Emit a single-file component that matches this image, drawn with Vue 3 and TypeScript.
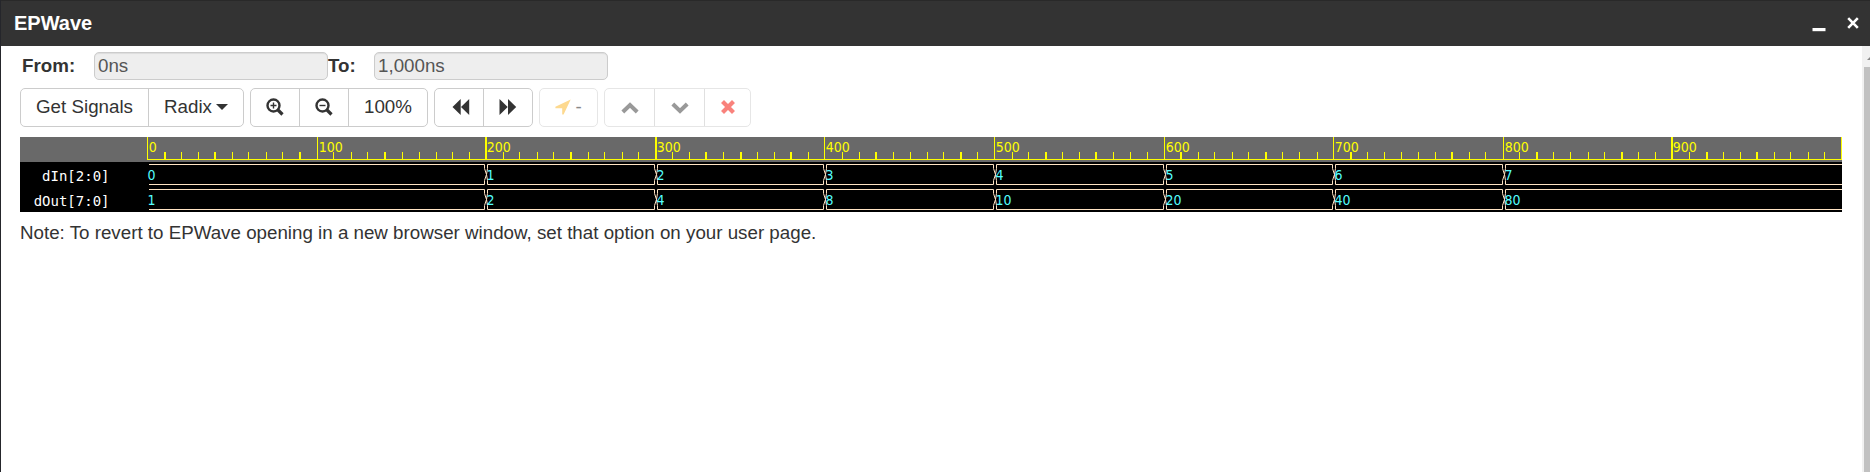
<script setup lang="ts">
interface Signal {
  name: string
  values: string[]
}

const signals: Signal[] = [
  { name: 'dIn[2:0]', values: ['0', '1', '2', '3', '4', '5', '6', '7'] },
  { name: 'dOut[7:0]', values: ['1', '2', '4', '8', '10', '20', '40', '80'] },
]

/* Tick columns, snapped to whole pixels; every tenth one is a major tick. */
const tickX: number[] = [
  127, 144, 161, 178, 194, 212, 228, 246, 262, 279,
  297, 313, 331, 347, 364, 382, 399, 416, 432, 449,
  465, 483, 499, 517, 533, 550, 568, 584, 602, 618,
  635, 652, 669, 685, 703, 720, 737, 754, 770, 788,
  804, 822, 839, 855, 873, 890, 907, 923, 940, 957,
  974, 992, 1008, 1025, 1042, 1059, 1075, 1093, 1110, 1127,
  1144, 1160, 1178, 1194, 1212, 1228, 1245, 1262, 1279, 1297,
  1313, 1330, 1347, 1364, 1381, 1398, 1415, 1431, 1449, 1465,
  1483, 1499, 1516, 1533, 1550, 1568, 1584, 1601, 1618, 1635,
  1651, 1669, 1686, 1703, 1720, 1736, 1754, 1770, 1788, 1804,
  1821,
]
const wide = new Set<number>([
  144, 194, 279, 364, 465, 550, 635, 685, 720, 770, 855, 940,
  1025, 1075, 1160, 1245, 1330, 1431, 1516, 1601, 1651, 1686, 1736,
])

const ticks = tickX.map((x, i) => ({
  x,
  major: i % 10 === 0,
  width: wide.has(x) ? 2 : 1,
  label: i % 10 === 0 && i < 100 ? String(i * 10) : '',
}))

const changes = [127, 465, 635, 804, 974, 1144, 1313, 1483]

const segments = changes.map((x, i) => {
  const next = changes[i + 1]
  if (next === undefined) {
    return `M1822 2.5H${x + 2.5}V6.5L${x + 1.5} 12.5L${x + 2.5} 18.5V22.5H1822`
  }
  const end = `H${next - 0.5}V6.5L${next + 1.5} 12.5L${next - 0.5} 18.5V22.5`
  return i === 0
    ? `M129 2.5${end}H129`
    : `M${x + 1.5} 12.5L${x + 2.5} 6.5V2.5${end}H${x + 2.5}V18.5Z`
})
</script>

<template>
  <div class="window">
    <header class="titlebar">
      <span class="title">EPWave</span>
      <svg class="minimize" width="14" height="4" viewBox="0 0 14 4"><path d="M0.5 0H13.5V3.2H0.5Z" fill="#fff" /></svg>
      <svg class="close" width="14" height="14" viewBox="0 0 14 14"><path d="M2.2 2.2L11.8 11.8M11.8 2.2L2.2 11.8" stroke="#fff" stroke-width="2.6" /></svg>
    </header>

    <div class="body">
      <main class="content">
        <div class="range">
          <label class="from" for="from">From:</label>
          <input id="from" value="0ns" disabled />
          <label class="to" for="to">To:</label>
          <input id="to" value="1,000ns" disabled />
        </div>

        <div class="toolbar">
          <div class="group">
            <button class="signals">Get Signals</button>
            <button class="radix">Radix<i class="caret"></i></button>
          </div>
          <div class="group">
            <button class="zoom">
              <svg width="18" height="18" viewBox="0 0 18 18" fill="none" stroke="#333">
                <circle cx="7.5" cy="7.5" r="6" stroke-width="2.4" />
                <path d="M12 12L16.5 16.5" stroke-width="3.2" />
                <path d="M4.5 7.5H10.5M7.5 4.5V10.5" stroke-width="1.4" />
              </svg>
            </button>
            <button class="zoom">
              <svg width="18" height="18" viewBox="0 0 18 18" fill="none" stroke="#333">
                <circle cx="7.5" cy="7.5" r="6" stroke-width="2.4" />
                <path d="M12 12L16.5 16.5" stroke-width="3.2" />
                <path d="M4.5 7.5H10.5" stroke-width="1.4" />
              </svg>
            </button>
            <button class="percent">100%</button>
          </div>
          <div class="group">
            <button class="seek">
              <svg width="18" height="16" viewBox="0 0 18 16" fill="#333"><path d="M8.7 0V16L0.5 8ZM17.2 0V16L9 8Z" /></svg>
            </button>
            <button class="seek">
              <svg width="18" height="16" viewBox="0 0 18 16" fill="#333"><path d="M0.5 0V16L8.7 8ZM9 0V16L17.2 8Z" /></svg>
            </button>
          </div>
          <div class="group faded">
            <button class="cursor">
              <svg width="16" height="16" viewBox="0 0 16 16"><path d="M15.7 0.4L8.6 15.6H7.2V9.2H0.4V7.8Z" fill="#fdd98f" /></svg>
              <span>-</span>
            </button>
          </div>
          <div class="group faded">
            <button class="move">
              <svg width="18" height="12" viewBox="0 0 18 12"><path d="M1.8 10L9 3L16.2 10" fill="none" stroke="#999" stroke-width="4" /></svg>
            </button>
            <button class="move">
              <svg width="18" height="12" viewBox="0 0 18 12"><path d="M1.8 2L9 9L16.2 2" fill="none" stroke="#999" stroke-width="4" /></svg>
            </button>
            <button class="remove">
              <svg width="14" height="14" viewBox="0 0 14 14"><path d="M3 3L11 11M11 3L3 11" stroke="#f9827c" stroke-width="4.2" stroke-linecap="square" /></svg>
            </button>
          </div>
        </div>

        <div class="wave">
          <svg class="ruler" width="1822" height="25" viewBox="0 0 1822 25">
            <g fill="#ff0">
              <rect x="127" y="22" width="1695" height="1" />
              <rect v-for="t in ticks" :key="t.x" :x="t.x" :y="t.major ? 0 : 15" :width="t.width" :height="t.major ? 23 : 8" />
            </g>
            <text v-for="t in ticks.filter((t) => t.label)" :key="t.label" class="mark" :x="t.x + 1.7" y="15">{{ t.label }}</text>
          </svg>
          <svg v-for="s in signals" :key="s.name" class="signal" width="1822" height="25" viewBox="0 0 1822 25">
            <text class="name" x="89.5" y="18.5" text-anchor="end">{{ s.name }}</text>
            <g fill="none" stroke="#ffe4c4">
              <path v-for="d in segments" :key="d" :d="d" />
            </g>
            <text v-for="(v, i) in s.values" :key="i" class="value" :x="changes[i] + (i ? 1.5 : 0.5)" y="18">{{ v }}</text>
          </svg>
        </div>

        <p class="note">Note: To revert to EPWave opening in a new browser window, set that option on your user page.</p>
      </main>
      <aside class="scrollbar">
        <svg width="8" height="21" viewBox="0 0 8 21"><path d="M5 14L8 11V14Z" fill="#888" /></svg>
        <div class="thumb"></div>
      </aside>
    </div>
  </div>
</template>

<style>
body {
  margin: 0;
  overflow: hidden;
}
</style>

<style scoped>
.window {
  box-sizing: border-box;
  width: 1870px;
  height: 472px;
  border-left: 1px solid #25262b;
  background: #fff;
  color: #333;
  font-family: 'Liberation Sans', Arial, sans-serif;
  font-size: 18.75px;
  overflow: hidden;
}
.titlebar {
  box-sizing: border-box;
  display: flex;
  align-items: center;
  height: 46px;
  padding: 0 10px 0 13px;
  border-top: 1px solid #292929;
  background: #333;
}
.title {
  flex: 1;
  padding-bottom: 1px;
  color: #fff;
  font-size: 20px;
  font-weight: bold;
}
.minimize {
  margin: 12px 20px 0 0;
}
.close {
  margin-bottom: 1px;
}
.body {
  display: flex;
  height: 426px;
}
.content {
  flex: 1;
  padding: 6px 0 0 19px;
}
.range {
  display: flex;
  align-items: center;
  height: 28px;
  font-weight: bold;
}
.range label {
  height: 24px;
  line-height: 23px;
}
.from {
  box-sizing: border-box;
  width: 74px;
  padding-left: 2px;
}
.to {
  width: 46px;
}
.range input {
  box-sizing: border-box;
  width: 234px;
  height: 28px;
  margin: 0;
  padding: 0 3px 1px;
  border: 1px solid #ccc;
  border-radius: 5px;
  background: #eee;
  box-shadow: inset 0 1px 1px rgba(0, 0, 0, 0.075);
  color: #555;
  font: 18.75px 'Liberation Sans', Arial, sans-serif;
}
.toolbar {
  display: flex;
  gap: 6px;
  margin-top: 8px;
}
.group {
  box-sizing: border-box;
  display: flex;
  height: 39px;
  border: 1px solid #ccc;
  border-radius: 5px;
}
.group button {
  box-sizing: border-box;
  display: flex;
  align-items: center;
  justify-content: center;
  margin: 0;
  padding: 0 0 2px;
  border: 0;
  background: none;
  color: #333;
  font: inherit;
}
.group button + button {
  border-left: 1px solid #ccc;
}
.group.faded {
  border-color: #e6e6e6;
}
.group.faded button + button {
  border-color: #e0e0e0;
}
.group .signals { width: 127px; }
.group .radix { width: 95px; }
.caret {
  margin: 1px 0 0 4px;
  border: 6px solid transparent;
  border-top: 6.5px solid #333;
  border-bottom: 0;
}
.group .zoom { width: 49px; }
.group .zoom:first-child { width: 48px; }
.group .zoom svg { margin-top: 1px; }
.group .percent { width: 79px; }
.group .seek { width: 49px; }
.group .seek:first-child { width: 48px; padding-left: 3px; }
.group .cursor {
  width: 57px;
  gap: 4px;
  color: #888;
}
.group .move { width: 50px; }
.group .move svg { margin-top: 3px; }
.group .move:first-child { width: 49px; }
.group .remove { width: 46px; }
.group .remove svg { margin-top: 1px; }
.wave {
  width: 1822px;
  margin-top: 10px;
  background: #000;
}
.wave svg {
  display: block;
}
.ruler {
  background: #696969;
}
.mark,
.value {
  font-family: 'DejaVu Sans Condensed', 'DejaVu Sans', sans-serif;
  font-size: 14px;
  font-stretch: semi-condensed;
}
.mark { fill: #ff0; }
.value { fill: #5ff; }
.name {
  fill: #fff;
  font: 14px 'DejaVu Sans Mono', monospace;
}
.note {
  margin: 10px 0 0;
  line-height: 22px;
}
.scrollbar {
  display: flex;
  flex-direction: column;
  width: 8px;
  background: #f1f1f1;
}
.thumb {
  flex: 1;
  margin-left: 2px;
  background: #c1c1c1;
}
</style>
